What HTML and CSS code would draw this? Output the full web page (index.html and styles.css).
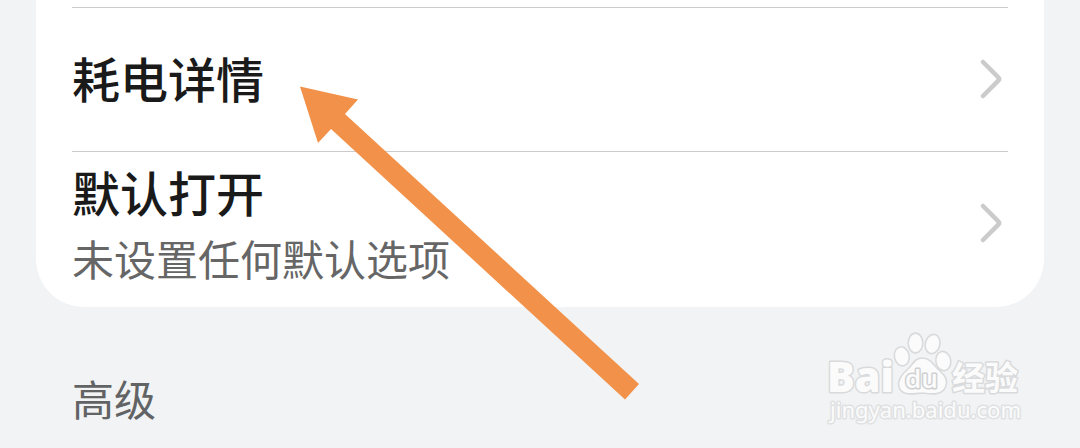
FILE: index.html
```html
<!DOCTYPE html>
<html lang="zh-CN">
<head>
    <meta charset="UTF-8">
    <meta name="viewport" content="width=device-width, initial-scale=1.0">
    <title>应用信息</title>
    <link rel="stylesheet" href="styles.css">
</head>
<body>
    <main class="card">
        <div class="row">
            <div class="title">耗电详情</div>
            <svg class="chevron" width="24" height="42" viewBox="0 0 24 42">
                <path d="M4 4 L19.3 19.3 Q21 21 19.3 22.7 L4 38"/>
            </svg>
        </div>
        <div class="row row-tall">
            <div>
                <div class="title">默认打开</div>
                <div class="subtitle">未设置任何默认选项</div>
            </div>
            <svg class="chevron" width="24" height="42" viewBox="0 0 24 42">
                <path d="M4 4 L19.3 19.3 Q21 21 19.3 22.7 L4 38"/>
            </svg>
        </div>
    </main>
    <h2 class="section">高级</h2>

    <svg class="arrow" width="340" height="314" viewBox="300 86 340 314">
        <polygon points="300,86.5 358,99.5 345,114 639,384 625,399.5 331,129 318,143"/>
    </svg>

    <svg class="watermark" width="210" height="104" viewBox="820 326 210 104">
        <text class="latin" x="827" y="392" textLength="67" lengthAdjust="spacingAndGlyphs">Bai</text>
        <ellipse cx="901.8" cy="356.3" rx="7.4" ry="9.6" transform="rotate(-12 901.8 356.3)"/>
        <ellipse cx="915.5" cy="343" rx="7.3" ry="9.9"/>
        <ellipse cx="932.6" cy="344" rx="7.3" ry="9.7" transform="rotate(14 932.6 344)"/>
        <ellipse cx="943.3" cy="361" rx="7.4" ry="9.7" transform="rotate(-10 943.3 361)"/>
        <path d="M922 358 C931 358 934 366 940 371 C947 377 948 382 945.5 387 C942 396 931 394 922 393 C911 394 902 396 899 387 C897 380 902 374 908 369 C913 364 915 358 922 358 Z"/>
        <text class="du" x="905" y="387.5" textLength="33" lengthAdjust="spacingAndGlyphs">du</text>
        <text class="hanzi" x="952" y="390" textLength="66">经验</text>
        <text class="site" x="830" y="418" textLength="191" lengthAdjust="spacingAndGlyphs">jingyan.baidu.com</text>
    </svg>
</body>
</html>
```

FILE: styles.css
```css
body {
    margin: 0;
    height: 448px;
    position: relative;
    overflow: hidden;
    background-color: #f1f3f5;
    font-family: "Noto Sans CJK SC", sans-serif;
}
.card {
    margin: 0 36px;
    padding: 7px 36px 0;
    background-color: #fff;
    border-radius: 0 0 48px 48px;
}
.row {
    display: flex;
    align-items: center;
    justify-content: space-between;
    box-sizing: border-box;
    height: 144px;
    padding-bottom: 2px;
    border-top: 1px solid #cbcbcb;
}
.row-tall {
    height: 156px;
    padding-bottom: 14px;
}
.title {
    padding-bottom: 3px;
    font-size: 48px;
    font-weight: 500;
    line-height: 64px;
    color: #1a1a1a;
}
.row-tall .title {
    padding: 3px 0 0;
}
.subtitle {
    margin-top: 3px;
    font-size: 42px;
    line-height: 64px;
    color: #666;
}
.chevron {
    margin-right: 5px;
    fill: none;
    stroke: #cbcbcb;
    stroke-width: 4.5;
    stroke-linecap: round;
}
.section {
    margin: 59px 72px 0;
    font-size: 42px;
    font-weight: 400;
    line-height: 64px;
    color: #626365;
}
.arrow {
    position: absolute;
    left: 300px;
    top: 86px;
    fill: #f2924a;
}
.watermark {
    position: absolute;
    left: 820px;
    top: 326px;
    fill: #fbfbfb;
    stroke: #d9dadb;
    stroke-width: 1.6;
}
.watermark text {
    paint-order: stroke;
    stroke-width: 3;
    stroke-linejoin: round;
}
.latin {
    font-family: "Open Sans", sans-serif;
    font-weight: 800;
    font-size: 43px;
}
.watermark .du {
    font-family: "Open Sans", sans-serif;
    font-weight: 600;
    font-size: 26px;
    stroke: #cfd0d1;
}
.hanzi {
    font-size: 33px;
    font-weight: 700;
}
.site {
    font-family: "Noto Sans", sans-serif;
    font-size: 22px;
    stroke: #dfe1e2;
}
```
